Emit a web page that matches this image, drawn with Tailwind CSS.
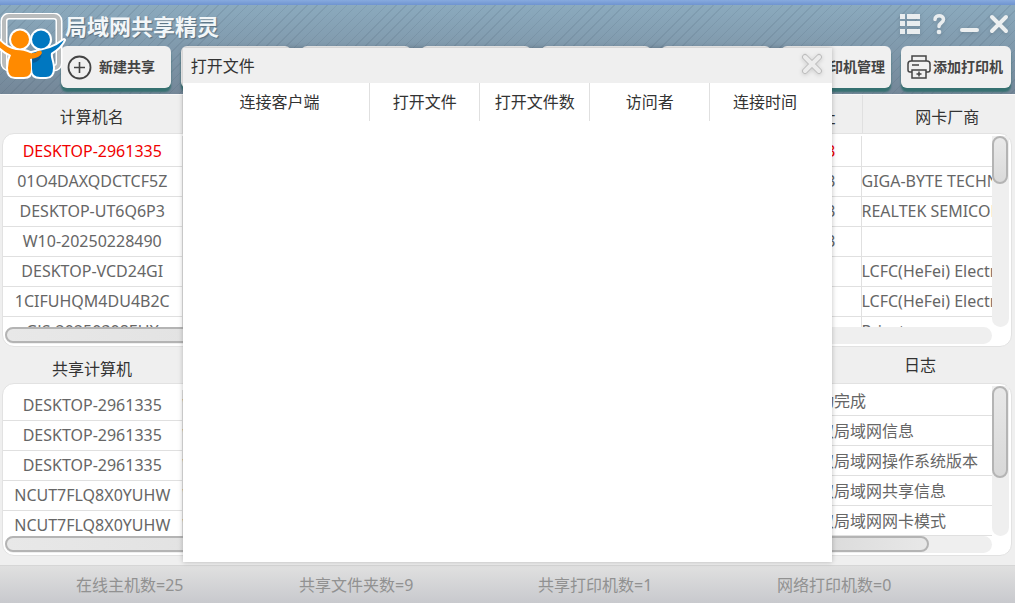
<!DOCTYPE html>
<html lang="zh-CN">
 <head>
  <meta charset="utf-8"/>
  <meta content="width=device-width, initial-scale=1.0" name="viewport"/>
  <title>局域网共享精灵</title>
  <script src="https://cdn.jsdelivr.net/npm/@tailwindcss/browser@4"></script>
 </head>
 <body class="relative h-screen overflow-hidden flex flex-col bg-[#efefef] text-base leading-6 text-[#666] font-['Noto_Sans','Noto_Sans_CJK_SC',sans-serif]">
  <div class="h-[5px] shrink-0 bg-linear-to-b from-[#87aade] to-[#6f94d0]"></div>

  <!-- header -->
  <header class="relative h-[90px] shrink-0 border-b border-[#f8f8f8] bg-[repeating-linear-gradient(135deg,rgba(60,80,100,0.13)_0px,rgba(60,80,100,0.13)_1px,transparent_1px,transparent_7px),linear-gradient(#8baabe,#748798)]">
   <svg class="absolute left-0 top-2 w-[66px] h-[68px]" viewBox="0 13 66 68" fill="none">
    <rect x="4" y="16" width="55" height="52" rx="5" stroke="#fff" stroke-width="7"/>
    <rect x="4" y="16" width="55" height="52" rx="5" stroke="#b9bcbd" stroke-width="4"/>
    <g stroke="#fff" stroke-width="4" stroke-linejoin="round">
     <circle cx="41" cy="39.500" r="9"/>
     <path d="M64 40Q61 47 51 53C50 58 53 61 53 68Q53 77 46 77H40Q32 77 32 69V53Q43 50 50 48Q58 45 64 40Z"/>
     <circle cx="20" cy="39.500" r="9"/>
     <path d="M-1 40Q6 48 16 50Q24 50 30 53Q35 54 38 51Q42 50 42 53Q40 58 30 59Q31 63 31 69Q31 77 24 77H15Q8 77 8 68Q8 61 11 55Q4 52-3 45Z"/>
    </g>
    <g fill="#0077c0">
     <circle cx="41" cy="39.500" r="9"/>
     <path d="M64 40Q61 47 51 53C50 58 53 61 53 68Q53 77 46 77H40Q32 77 32 69V53Q43 50 50 48Q58 45 64 40Z"/>
    </g>
    <path d="M32 58Q40 57 42 53Q41 61 33 63Z" fill="#0a5a96"/>
    <g fill="#ff8a00">
     <circle cx="20" cy="39.500" r="9"/>
     <path d="M-1 40Q6 48 16 50Q24 50 30 53Q35 54 38 51Q42 50 42 53Q40 58 30 59Q31 63 31 69Q31 77 24 77H15Q8 77 8 68Q8 61 11 55Q4 52-3 45Z"/>
    </g>
   </svg>
   <div class="flex items-center justify-between h-[38px] pl-[65px] pr-[6px]">
    <h1 class="text-[22px] leading-8 pt-1 font-bold text-[#f2f6f8] text-shadow-[1px_1px_1px_rgba(60,80,95,0.6)]">局域网共享精灵</h1>
    <div class="flex items-center gap-[10px]">
     <button type="button" aria-label="列表">
      <svg class="block w-[22px] h-[22px] drop-shadow-sm" viewBox="0 0 22 22" fill="#e9edef"><path d="M1 1h5v5H1zM8 1h13v5H8zM1 8h5v5H1zM8 8h13v5H8zM1 16h5v5H1zM8 16h13v5H8z"/></svg>
     </button>
     <button type="button" aria-label="帮助">
      <svg class="block w-4 h-[22px] drop-shadow-sm" viewBox="0 0 16 22" fill="none" stroke="#e9edef" stroke-width="3.500" stroke-linecap="round"><path d="M4 6.500C4 1.500 12.500 1.500 12.500 6.500C12.500 10 8 9.500 8 13.500"/><circle cx="8" cy="19" r="2.300" fill="#e9edef" stroke="none"/></svg>
     </button>
     <button type="button" aria-label="最小化">
      <svg class="block w-[22px] h-[22px] drop-shadow-sm" viewBox="0 0 22 22"><rect x="3" y="15" width="19" height="4" rx="2" fill="#eceff0"/></svg>
     </button>
     <button type="button" aria-label="关闭">
      <svg class="block w-5 h-[22px] drop-shadow-sm" viewBox="0 0 20 22" stroke="#eceff0" stroke-width="4" stroke-linecap="round"><path d="M3 4l14 14M17 4L3 18"/></svg>
     </button>
    </div>
   </div>
   <nav class="grid grid-cols-8 gap-[10px] pl-[61px] pr-1 pt-[3px] text-sm leading-5 font-bold text-[#444]">
    <button type="button" class="h-[42px] px-[6px] flex items-center gap-[7px] whitespace-nowrap rounded-md bg-[#f0f0f0] shadow-[0_4px_2px_#357070]">
     <svg class="w-[25px] h-[25px] shrink-0" viewBox="0 0 25 25" fill="none" stroke="#444"><circle cx="12.500" cy="12.500" r="11" stroke-width="1.800"/><path d="M12.500 7v11M7 12.500h11" stroke-width="1.600"/></svg>
     新建共享
    </button>
    <button type="button" aria-label="打开文件" class="h-[42px] rounded-md bg-[#f0f0f0] shadow-[0_4px_2px_#357070]"></button>
    <button type="button" aria-label="共享管理" class="h-[42px] rounded-md bg-[#f0f0f0] shadow-[0_4px_2px_#357070]"></button>
    <button type="button" aria-label="用户管理" class="h-[42px] rounded-md bg-[#f0f0f0] shadow-[0_4px_2px_#357070]"></button>
    <button type="button" aria-label="网络设置" class="h-[42px] rounded-md bg-[#f0f0f0] shadow-[0_4px_2px_#357070]"></button>
    <button type="button" aria-label="刷新" class="h-[42px] rounded-md bg-[#f0f0f0] shadow-[0_4px_2px_#357070]"></button>
    <button type="button" class="h-[42px] px-[6px] flex items-center justify-end whitespace-nowrap rounded-md bg-[#f0f0f0] shadow-[0_4px_2px_#357070]">打印机管理</button>
    <button type="button" class="h-[42px] px-[6px] flex items-center gap-[2px] whitespace-nowrap rounded-md bg-[#f0f0f0] shadow-[0_4px_2px_#357070]">
     <svg class="w-6 h-6 shrink-0" viewBox="0 0 24 24" fill="none" stroke="#444" stroke-width="1.500"><path d="M5 6V1h14v5M5 17H3Q1 17 1 15V9Q1 6 4 6H20Q23 6 23 9V15Q23 17 21 17H19M5 10h7M5 15h14v8H5zM12 16.500v5M9.500 19h5"/></svg>
     添加打印机
    </button>
   </nav>
  </header>

  <main class="flex-1 min-h-0 flex flex-col pl-[2px] pr-[3px] pb-[9px]">
   <!-- computers -->
   <table class="w-full table-fixed shrink-0 text-[#333]">
    <colgroup><col class="w-[180px]"/><col/><col class="w-[180px]"/><col class="w-[150px]"/></colgroup>
    <thead>
     <tr class="h-[38px]">
      <th class="font-normal pt-[6px] border-r border-[#e0e0e0]">计算机名</th>
      <th></th>
      <th class="font-normal pt-[6px] pr-[26px] text-right border-r border-[#e0e0e0]">MAC地址</th>
      <th class="font-normal pt-[6px] pl-5">网卡厂商</th>
     </tr>
    </thead>
   </table>
   <section class="flex-[208] min-h-0 flex flex-col p-[2px] rounded-xl border border-[#e2e2e2] bg-white">
    <div class="flex-1 min-h-0 flex">
     <div class="flex-1 min-w-0 overflow-hidden -ml-[2px]">
      <table class="w-full table-fixed whitespace-nowrap">
       <colgroup><col class="w-[179px]"/><col/><col class="w-[180px]"/><col class="w-[131px]"/></colgroup>
       <tbody class="[&_td]:border-b [&_td]:border-[#e0e0e0] [&_td]:p-0">
        <tr class="h-[30px] text-[#f00000]"><td class="text-center border-r">DESKTOP-2961335</td><td></td><td><div class="text-right pr-[25px]">00-E0-4C-68-1A-23</div></td><td class="border-l"></td></tr>
        <tr class="h-[30px]"><td class="text-center border-r">01O4DAXQDCTCF5Z</td><td></td><td><div class="text-right pr-[25px]">74-56-3C-90-2F-13</div></td><td class="border-l overflow-hidden">GIGA-BYTE TECHNOLOGY</td></tr>
        <tr class="h-[30px]"><td class="text-center border-r">DESKTOP-UT6Q6P3</td><td></td><td><div class="text-right pr-[25px]">00-E0-4C-36-0D-83</div></td><td class="border-l overflow-hidden">REALTEK SEMICONDUCTOR</td></tr>
        <tr class="h-[30px]"><td class="text-center border-r">W10-20250228490</td><td></td><td><div class="text-right pr-[25px]">08-BF-B8-41-7E-33</div></td><td class="border-l"></td></tr>
        <tr class="h-[30px]"><td class="text-center border-r">DESKTOP-VCD24GI</td><td></td><td></td><td class="border-l overflow-hidden">LCFC(HeFei) Electronics</td></tr>
        <tr class="h-[30px]"><td class="text-center border-r">1CIFUHQM4DU4B2C</td><td></td><td></td><td class="border-l overflow-hidden">LCFC(HeFei) Electronics</td></tr>
        <tr class="h-[30px]"><td class="text-center border-r">GJS-20250308EUX</td><td></td><td></td><td class="border-l overflow-hidden">Private</td></tr>
       </tbody>
      </table>
     </div>
     <div class="w-[17px] shrink-0 rounded-b-full bg-[#efefef]">
      <div class="w-4 h-12 rounded-full border-2 border-[#b4b4b4] bg-linear-to-b from-[#eaeaea] to-[#dadada]"></div>
     </div>
    </div>
    <div class="h-[17px] shrink-0 mr-[17px] rounded-full bg-[#efefef]">
     <div class="w-3/5 h-4 rounded-full border-2 border-[#b4b4b4] bg-linear-to-r from-[#e8e8e8] to-[#d8d8d8]"></div>
    </div>
   </section>

   <!-- shares and log -->
   <div class="flex h-9 shrink-0 items-center text-[#333]">
    <h2 class="w-[180px] pt-2 text-center">共享计算机</h2>
    <h2 class="w-[184px] ml-auto text-center">日志</h2>
   </div>
   <div class="flex-[173] min-h-0 flex gap-2">
    <section class="flex-1 min-w-0 flex flex-col p-[2px] rounded-xl border border-[#e2e2e2] bg-white">
     <div class="flex-1 min-h-0 overflow-hidden pt-1 -ml-[2px]">
      <table class="w-full table-fixed whitespace-nowrap">
       <colgroup><col class="w-[179px]"/><col/></colgroup>
       <tbody class="[&_td]:border-b [&_td]:border-[#e0e0e0] [&_td]:p-0">
        <tr class="h-[30px]"><td class="text-center border-r">DESKTOP-2961335</td><td>WORKGROUP</td></tr>
        <tr class="h-[30px]"><td class="text-center border-r">DESKTOP-2961335</td><td>WORKGROUP</td></tr>
        <tr class="h-[30px]"><td class="text-center border-r">DESKTOP-2961335</td><td>WORKGROUP</td></tr>
        <tr class="h-[30px]"><td class="text-center border-r">NCUT7FLQ8X0YUHW</td><td>WORKGROUP</td></tr>
        <tr class="h-[30px]"><td class="text-center border-r">NCUT7FLQ8X0YUHW</td><td>WORKGROUP</td></tr>
       </tbody>
      </table>
     </div>
     <div class="h-[17px] shrink-0 rounded-full bg-[#efefef]">
      <div class="w-2/3 h-4 rounded-full border-2 border-[#b4b4b4] bg-linear-to-r from-[#e8e8e8] to-[#d8d8d8]"></div>
     </div>
    </section>
    <section class="w-[213px] flex flex-col p-[2px] rounded-xl border border-[#e2e2e2] bg-white">
     <div class="flex-1 min-h-0 flex">
      <ul class="flex-1 min-w-0 overflow-hidden whitespace-nowrap *:h-[30px] *:pt-[3px] *:border-b *:border-[#e0e0e0]">
       <li>启动完成</li>
       <li>获取局域网信息</li>
       <li>获取局域网操作系统版本</li>
       <li>获取局域网共享信息</li>
       <li>获取局域网网卡模式</li>
      </ul>
      <div class="w-[17px] shrink-0 rounded-b-full bg-[#efefef]">
       <div class="w-4 h-[92px] rounded-full border-2 border-[#b4b4b4] bg-linear-to-b from-[#e8e8e8] to-[#d8d8d8]"></div>
      </div>
     </div>
     <div class="h-[17px] shrink-0 mr-[17px] rounded-full bg-[#efefef]">
      <div class="w-2/3 h-4 rounded-full border-2 border-[#b4b4b4] bg-linear-to-r from-[#d8d8d8] to-[#e8e8e8]"></div>
     </div>
    </section>
   </div>
  </main>

  <footer class="h-[38px] shrink-0 grid grid-cols-[223fr_239fr_239fr_238fr] items-center pl-[76px] pt-px border-t border-[#d6d6d6] bg-linear-to-b from-[#e0e0e0] to-[#c8c9cd] text-[#919191]">
   <span>在线主机数=25</span>
   <span>共享文件夹数=9</span>
   <span>共享打印机数=1</span>
   <span>网络打印机数=0</span>
  </footer>

  <!-- open files dialog -->
  <div role="dialog" aria-labelledby="dialog-title" class="absolute top-12 bottom-[41px] left-[18%] right-[18%] bg-white shadow-[0_0_5px_rgba(0,0,0,0.25)]">
   <div class="h-[35px] flex items-center justify-between pl-2 pr-[9px] bg-[#efefef] text-[#333]">
    <h2 id="dialog-title">打开文件</h2>
    <button type="button" aria-label="关闭" class="-mt-1">
     <svg class="block w-[22px] h-[22px] drop-shadow-sm" viewBox="0 0 22 22" stroke-linecap="round"><path d="M4 4l14 14M18 4L4 18" stroke="#bdbdbd" stroke-width="6"/><path d="M4 4l14 14M18 4L4 18" stroke="#ececec" stroke-width="4"/></svg>
    </button>
   </div>
   <table class="table-fixed w-[630px] ml-[7px] text-[#333]">
    <colgroup><col class="w-[180px]"/><col class="w-[110px]"/><col class="w-[110px]"/><col class="w-[120px]"/><col class="w-[110px]"/></colgroup>
    <thead>
     <tr class="h-[38px] *:font-normal *:border-[#e0e0e0]">
      <th class="border-r">连接客户端</th>
      <th class="border-r">打开文件</th>
      <th class="border-r">打开文件数</th>
      <th class="border-r">访问者</th>
      <th>连接时间</th>
     </tr>
    </thead>
   </table>
  </div>
 </body>
</html>
